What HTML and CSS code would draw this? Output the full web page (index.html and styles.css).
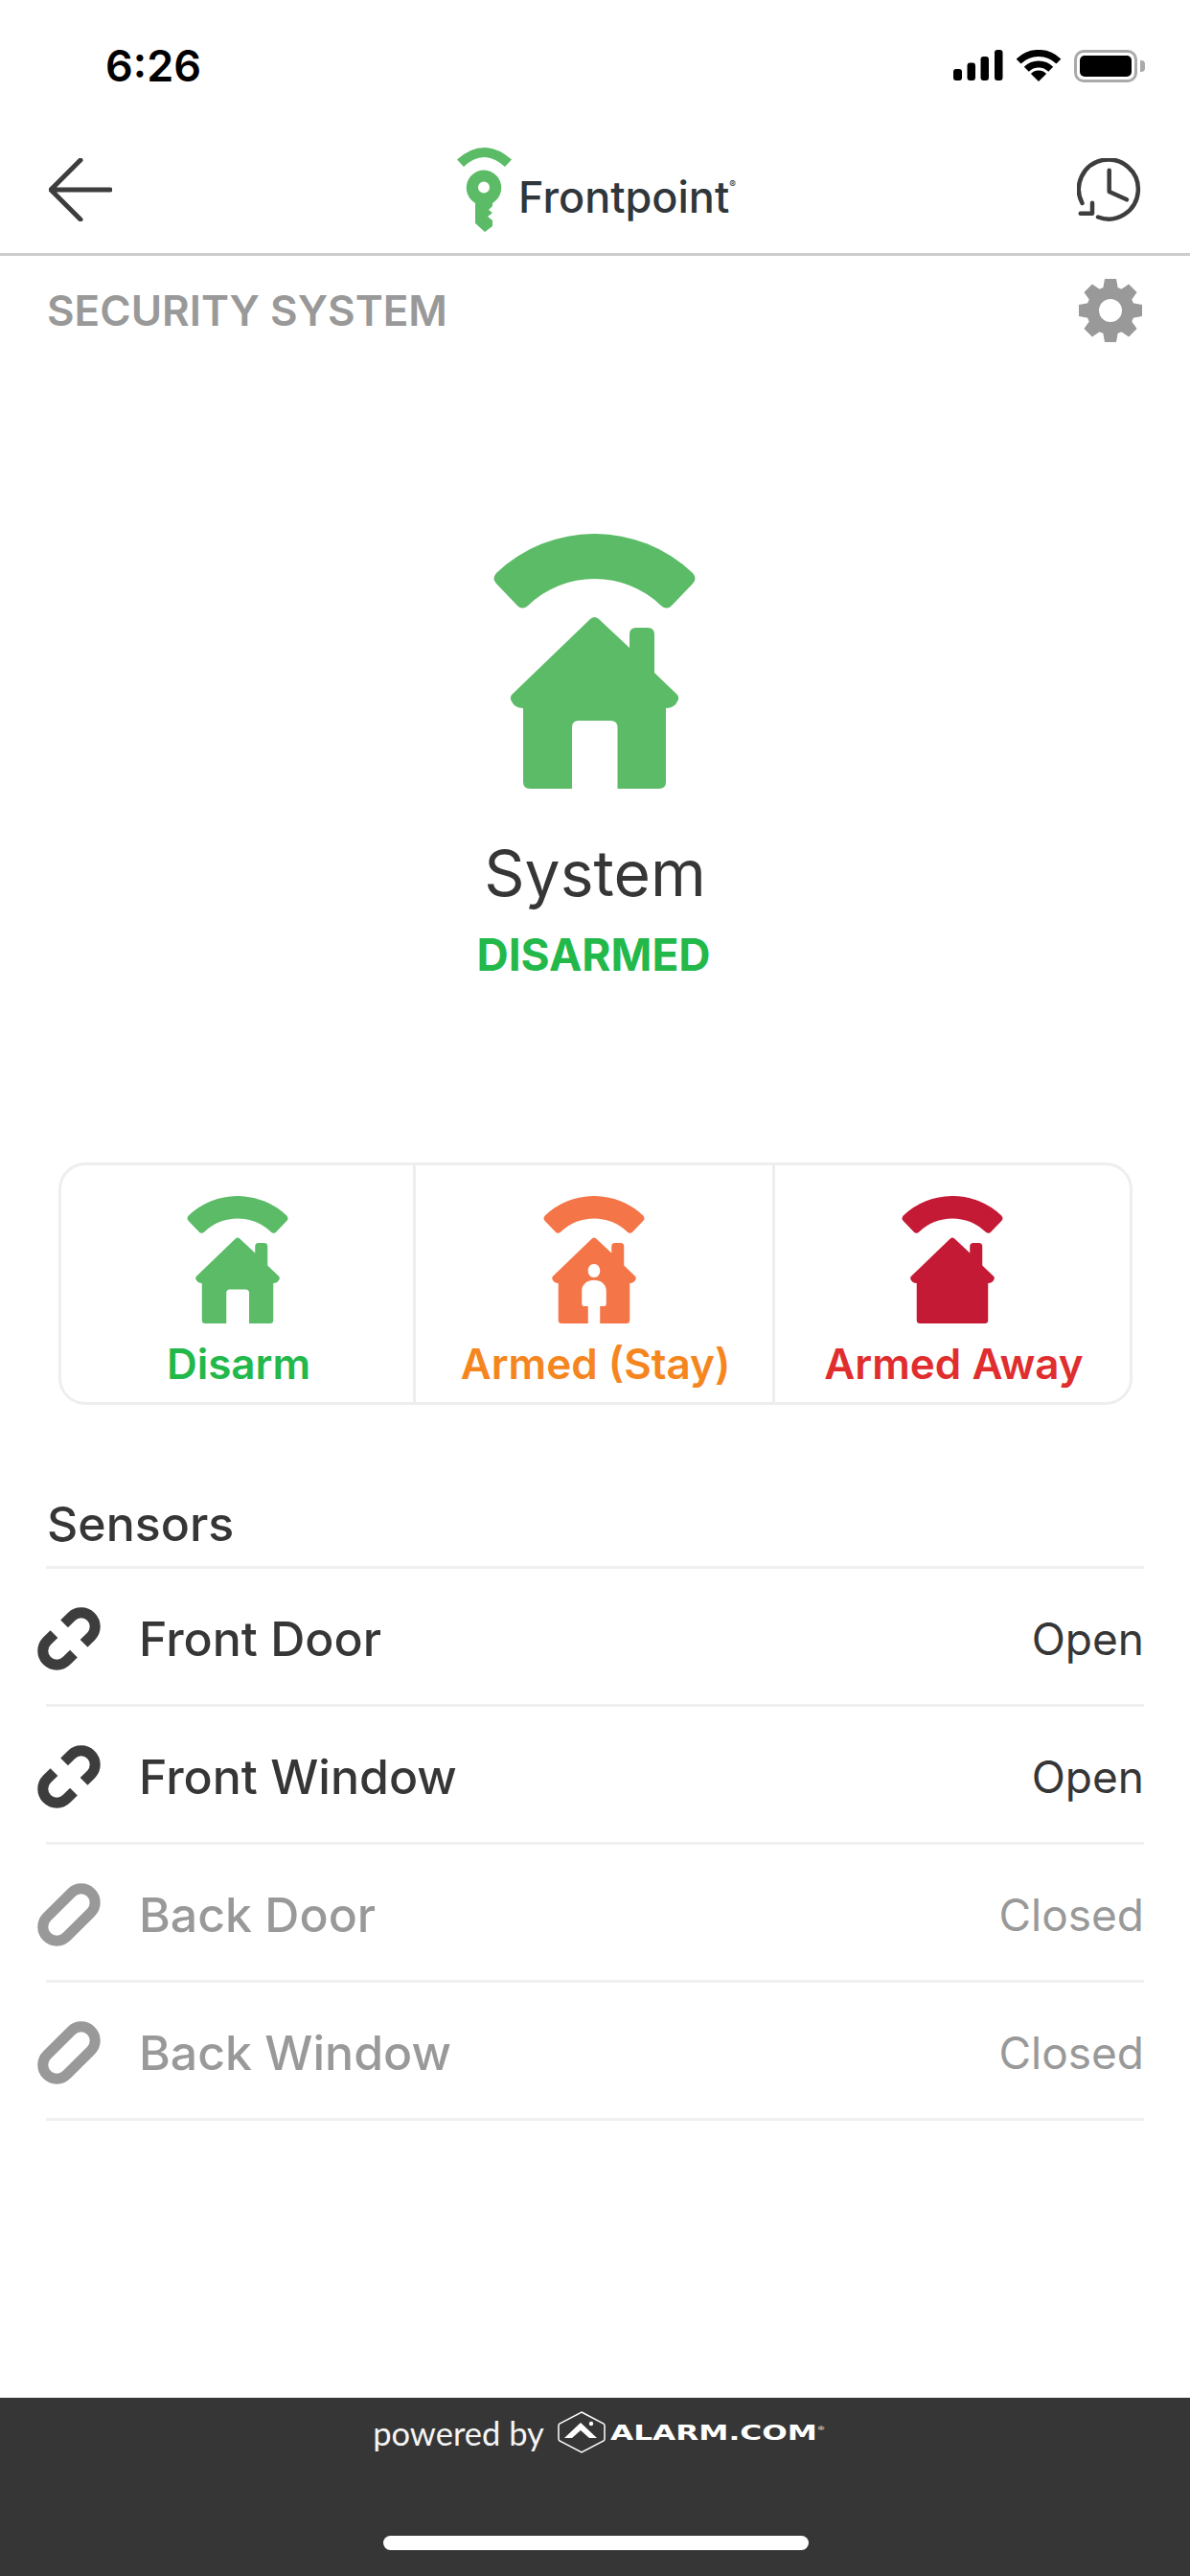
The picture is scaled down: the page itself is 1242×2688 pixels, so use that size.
FILE: index.html
```html
<!DOCTYPE html>
<html lang="en">

<head>
    <meta charset="UTF-8">
    <meta name="viewport" content="width=device-width, initial-scale=1.0">
    <title>Security System</title>
    <link rel="stylesheet" href="styles.css">
</head>

<body>
    <svg class="defs" width="0" height="0">
        <defs>
            <path id="arc" d="M3,41 A148.6,148.6 0 0 1 208,41 Q213,47 208,52 L186,75 Q181,80 175,75 A100,100 0 0 0 36,75 Q30,80 25,75 L3,52 Q-2,47 3,41Z" />
            <path id="house-door" d="M101,89 Q105.5,85 110,89 L142,119 V105 Q142,98 149,98 H161 Q168,98 168,105 V145 L192,168 Q194,171 192.5,174 Q189,182 180,182 V259 Q180,266 173,266 H129.5 V202 Q129.5,195 122,195 H89 Q82,195 82,202 V266 H38 Q31,266 31,259 V182 Q22,182 18.5,174 Q17,171 19,168 Z" />
            <path id="house-person" fill-rule="evenodd" d="M101,89 Q105.5,85 110,89 L142,119 V105 Q142,98 149,98 H161 Q168,98 168,105 V145 L192,168 Q194,171 192.5,174 Q189,182 180,182 V259 Q180,266 173,266 H118 V230 H127 Q131,230 131,224 V198 C131,168 80,168 80,198 V224 Q80,230 84,230 H93 V266 H38 Q31,266 31,259 V182 Q22,182 18.5,174 Q17,171 19,168 Z M105.5,142 C97,142 93,149 93,156 C93,163 97,170 105.5,170 C114,170 118,163 118,156 C118,149 114,142 105.5,142 Z" />
            <path id="house-solid" d="M101,89 Q105.5,85 110,89 L142,119 V105 Q142,98 149,98 H161 Q168,98 168,105 V145 L192,168 Q194,171 192.5,174 Q189,182 180,182 V259 Q180,266 173,266 H38 Q31,266 31,259 V182 Q22,182 18.5,174 Q17,171 19,168 Z" />
            <g id="link-open" fill="none" stroke="currentColor" stroke-width="11" transform="rotate(-45 33 33)">
                <path d="M40.500,18.500 H51 A14.500,14.500 0 0 1 51,47.500 H40.500" />
                <path d="M25.500,47.500 H15 A14.500,14.500 0 0 1 15,18.500 H25.500" />
            </g>
            <rect id="link-closed" x="0.5" y="18.500" width="65" height="29" rx="14.500" fill="none" stroke="currentColor" stroke-width="11" transform="rotate(-45 33 33)" />
        </defs>
    </svg>

    <div class="app">
        <div class="status-bar">
            <span class="time">6:26</span>
            <div class="status-icons">
                <svg width="52" height="33" viewBox="0 0 52 33">
                    <rect x="0" y="20" width="9" height="12" rx="3" />
                    <rect x="14.500" y="13.500" width="8.500" height="18.500" rx="3" />
                    <rect x="28.500" y="7" width="8.500" height="25" rx="3" />
                    <rect x="43" y="0" width="8.500" height="32" rx="3" />
                </svg>
                <svg width="46" height="33" viewBox="0 0 46 33">
                    <path d="M2.100,12.100 A29.500,29.500 0 0 1 43.900,12.100" fill="none" stroke="#000" stroke-width="7" />
                    <path d="M10.300,20.300 A18,18 0 0 1 35.700,20.300" fill="none" stroke="#000" stroke-width="7" />
                    <path d="M23,33 L14.900,24.900 A11.500,11.500 0 0 1 31.100,24.900 Z" />
                </svg>
                <div class="battery">
                    <div class="battery-level"></div>
                </div>
            </div>
        </div>

        <div class="nav">
            <svg class="nav-icon" width="66" height="66" viewBox="0 0 66 66">
                <path d="M33,2 L2,33 L33,64 M2,33 H64" fill="none" stroke="#3d3d3d" stroke-width="5" stroke-linecap="round" stroke-linejoin="round" />
            </svg>
            <div class="logo">
                <svg class="logo-key" width="58" height="89" viewBox="0 0 58 89">
                    <g fill="#5cbb67">
                        <path d="M0,12.500 Q28,-12.500 57,12.500 L50,20 Q28,0 7,20 Z" />
                        <path fill-rule="evenodd" d="M28,23.500 A18.500,18.500 0 0 1 37,58 V61 L33,65 L37,68 L32,72 L37,76 V82 L29,88 L19,79 V58 A18.500,18.500 0 0 1 28,23.500 Z M28,35.500 A6,6 0 1 0 28,47.500 A6,6 0 1 0 28,35.500 Z" />
                    </g>
                </svg>
                <span class="logo-text">Frontpoint<sup class="logo-reg">®</sup></span>
            </div>
            <svg class="nav-icon history" width="68" height="66" viewBox="0 0 68 66">
                <g fill="none" stroke="#3d3d3d" stroke-width="4.500" stroke-linecap="round" stroke-linejoin="round">
                    <path d="M22,61.500 A31,31 0 1 0 5.500,47" />
                    <path d="M3.700,57.700 H16 V46.700" />
                    <path d="M33.700,12.700 V35 L52,43.300" />
                </g>
            </svg>
        </div>

        <div class="section-head">
            <span class="section-title">SECURITY SYSTEM</span>
            <svg width="66" height="66" viewBox="0 0 66 66" fill="#999">
                <circle cx="33" cy="33" r="18.500" fill="none" stroke="#999" stroke-width="13" />
                <polygon points="27,0 39,0 41,11 25,11" />
                <polygon points="27,0 39,0 41,11 25,11" transform="rotate(45 33 33)" />
                <polygon points="27,0 39,0 41,11 25,11" transform="rotate(90 33 33)" />
                <polygon points="27,0 39,0 41,11 25,11" transform="rotate(135 33 33)" />
                <polygon points="27,0 39,0 41,11 25,11" transform="rotate(180 33 33)" />
                <polygon points="27,0 39,0 41,11 25,11" transform="rotate(225 33 33)" />
                <polygon points="27,0 39,0 41,11 25,11" transform="rotate(270 33 33)" />
                <polygon points="27,0 39,0 41,11 25,11" transform="rotate(315 33 33)" />
            </svg>
        </div>

        <div class="hero">
            <svg class="hero-icon" width="211" height="266" viewBox="0 0 211 266" fill="#5cbb67">
                <use href="#arc" />
                <use href="#house-door" />
            </svg>
            <div class="hero-name">System</div>
            <div class="hero-state">DISARMED</div>
        </div>

        <div class="modes">
            <div class="mode mode-disarm">
                <svg width="106" height="133" viewBox="0 0 211 266">
                    <use href="#arc" />
                    <use href="#house-door" />
                </svg>
                <span class="mode-label">Disarm</span>
            </div>
            <div class="mode mode-stay">
                <svg width="106" height="133" viewBox="0 0 211 266">
                    <use href="#arc" />
                    <use href="#house-person" />
                </svg>
                <span class="mode-label">Armed (Stay)</span>
            </div>
            <div class="mode mode-away">
                <svg width="106" height="133" viewBox="0 0 211 266">
                    <use href="#arc" />
                    <use href="#house-solid" />
                </svg>
                <span class="mode-label">Armed Away</span>
            </div>
        </div>

        <div class="sensors">
            <div class="sensors-title">Sensors</div>
            <div class="sensor">
                <svg class="sensor-icon" width="66" height="66" viewBox="0 0 66 66"><use href="#link-open" /></svg>
                <span class="sensor-name">Front Door</span>
                <span class="sensor-state">Open</span>
            </div>
            <div class="sensor">
                <svg class="sensor-icon" width="66" height="66" viewBox="0 0 66 66"><use href="#link-open" /></svg>
                <span class="sensor-name">Front Window</span>
                <span class="sensor-state">Open</span>
            </div>
            <div class="sensor closed">
                <svg class="sensor-icon" width="66" height="66" viewBox="0 0 66 66"><use href="#link-closed" /></svg>
                <span class="sensor-name">Back Door</span>
                <span class="sensor-state">Closed</span>
            </div>
            <div class="sensor closed">
                <svg class="sensor-icon" width="66" height="66" viewBox="0 0 66 66"><use href="#link-closed" /></svg>
                <span class="sensor-name">Back Window</span>
                <span class="sensor-state">Closed</span>
            </div>
        </div>

        <div class="footer">
            <div class="powered">
                <span class="powered-text">powered by</span>
                <svg width="50" height="44" viewBox="0 0 50 44">
                    <path d="M25,1 L48,13 Q49,14 49,15 V29 Q49,30 48,31 L25,43 L2,31 Q1,30 1,29 V15 Q1,14 2,13 Z" fill="none" stroke="#fff" stroke-width="1.500" />
                    <path d="M24,12 L41,28 H33 L24,20 L15,28 H7 Z" fill="#fff" />
                    <circle cx="35" cy="13" r="2.200" fill="#fff" />
                </svg>
                <span class="alarm-text">ALARM.COM<sup class="alarm-reg">®</sup></span>
            </div>
            <div class="home-bar"></div>
        </div>
    </div>
</body>

</html>
```

FILE: styles.css
```css
* {
    box-sizing: border-box;
}

body {
    margin: 0;
    background: #fff;
    font-family: "Inter", "Liberation Sans", sans-serif;
    color: #363636;
}

.defs {
    position: absolute;
}

.app {
    width: 1242px;
    height: 2688px;
    display: flex;
    flex-direction: column;
    overflow: hidden;
}

.status-bar {
    height: 138px;
    padding: 46px 48px 0 110px;
    display: flex;
    justify-content: space-between;
    align-items: flex-start;
}

.time {
    font-size: 45px;
    line-height: 46px;
    font-weight: 600;
    color: #000;
}

.status-icons {
    display: flex;
    align-items: flex-start;
    gap: 14px;
    padding-top: 6px;
}

.battery {
    position: relative;
    width: 66px;
    height: 34px;
    border: 3px solid #aaa;
    border-radius: 10px;
    padding: 3px;
    margin-right: 7px;
}

.battery::after {
    content: "";
    position: absolute;
    right: -11px;
    top: 8px;
    width: 5px;
    height: 12px;
    background: #aaa;
    border-radius: 0 4px 4px 0;
}

.battery-level {
    height: 100%;
    background: #000;
    border-radius: 5px;
}

.nav {
    height: 129px;
    padding: 16px 50px 0 51px;
    display: grid;
    grid-template-columns: 1fr auto 1fr;
    align-items: start;
    border-bottom: 3px solid #ccc;
}

.nav-icon {
    margin-top: 11px;
}

.history {
    justify-self: end;
}

.logo {
    display: flex;
    gap: 6px;
    align-items: flex-start;
    padding-left: 2px;
}

.logo-text {
    margin-top: 29px;
    font-size: 45px;
    line-height: 46px;
    font-weight: 500;
    color: #30363a;
}

.logo-reg {
    font-size: 10px;
    line-height: 0;
    vertical-align: 26px;
}

.section-head {
    padding: 24px 50px 0 49px;
    display: flex;
    justify-content: space-between;
    align-items: center;
}

.section-title {
    font-size: 44px;
    font-weight: 600;
    color: #999;
}

.hero {
    display: flex;
    flex-direction: column;
    align-items: center;
    padding-top: 200px;
}

.hero-icon {
    margin-left: -2px;
}

.hero-name {
    margin-top: 48px;
    font-size: 66px;
    line-height: 80px;
}

.hero-state {
    margin-top: 17px;
    margin-left: -3px;
    font-size: 46px;
    line-height: 56px;
    font-weight: 700;
    color: #22b84a;
}

.modes {
    margin: 189px 60px 0 61px;
    height: 253px;
    display: grid;
    grid-template-columns: 367px 375px 1fr;
    border: 3px solid #eee;
    border-radius: 28px;
}

.mode {
    display: flex;
    flex-direction: column;
    align-items: center;
    padding-top: 32px;
    border-left: 3px solid #eee;
}

.mode:first-child {
    border-left: 0;
}

.mode-label {
    margin-top: 17px;
    margin-left: 3px;
    font-size: 44px;
    line-height: 50px;
    font-weight: 600;
}

.mode-disarm svg {
    fill: #5cbb67;
}

.mode-disarm .mode-label {
    color: #22b84a;
}

.mode-stay svg {
    fill: #f47547;
}

.mode-stay .mode-label {
    color: #f5861f;
}

.mode-away svg {
    fill: #c41a35;
}

.mode-away .mode-label {
    color: #e02d2d;
}

.sensors {
    margin: 99px 48px 0;
}

.sensors-title {
    height: 72px;
    border-bottom: 3px solid #f0f0f0;
    padding-left: 1px;
    font-size: 50px;
    line-height: 50px;
    font-weight: 500;
}

.sensor {
    height: 144px;
    padding-top: 4px;
    display: flex;
    align-items: center;
    border-bottom: 3px solid #f0f0f0;
    font-size: 50px;
    font-weight: 500;
}

.sensor-icon {
    margin-left: -9px;
    margin-right: 40px;
    color: #3d3d3d;
}

.sensor-name {
    flex: 1;
}

.sensor-state {
    font-size: 46px;
    font-weight: 400;
}

.closed {
    color: #999;
}

.closed .sensor-icon {
    color: #999;
}

.footer {
    margin-top: auto;
    height: 186px;
    padding-top: 14px;
    background: #363636;
    display: flex;
    flex-direction: column;
    align-items: center;
}

.powered {
    height: 44px;
    padding-left: 4px;
    display: flex;
    align-items: center;
    gap: 14px;
    color: #fff;
}

.powered-text {
    font-family: "Lato", sans-serif;
    font-size: 34.5px;
    color: #f4f4f4;
}

.alarm-text {
    width: 220px;
    margin-left: -9px;
    font-family: "DejaVu Sans", sans-serif;
    font-size: 22px;
    font-weight: 700;
    white-space: nowrap;
    transform: scaleX(1.42);
    transform-origin: left center;
}

.alarm-reg {
    font-size: 6px;
    font-weight: 400;
    line-height: 0;
    vertical-align: 10px;
}

.home-bar {
    width: 444px;
    height: 15px;
    margin-top: 86px;
    margin-left: 2px;
    background: #fff;
    border-radius: 8px;
}
```
